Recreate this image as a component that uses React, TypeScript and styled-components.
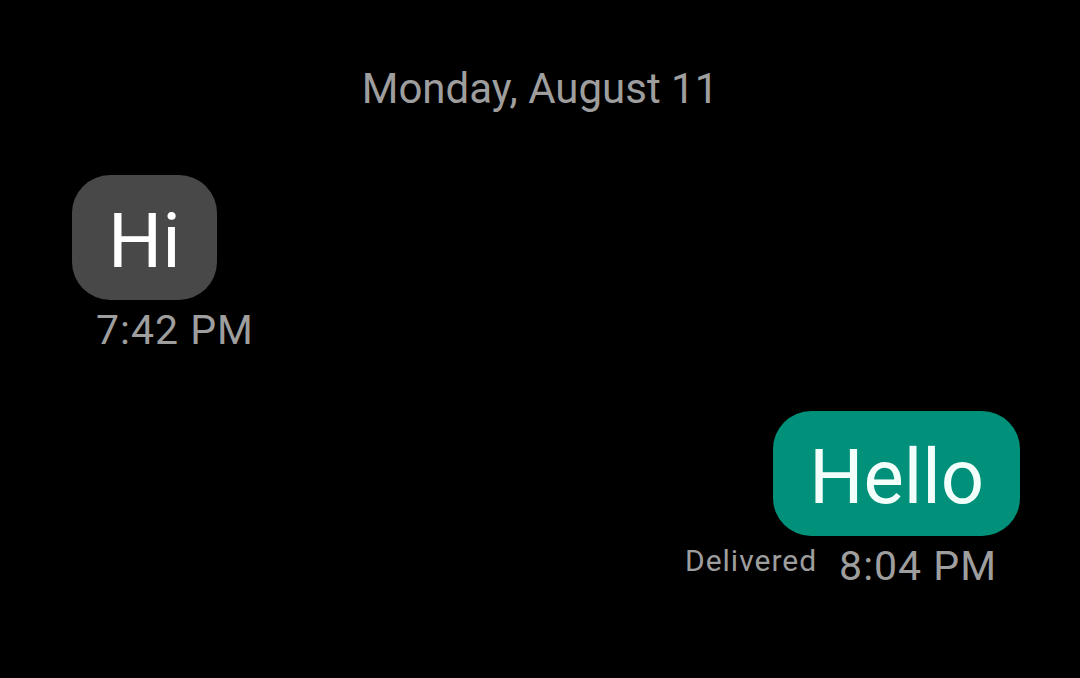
import React from 'react';
import styled, { createGlobalStyle } from 'styled-components';

const GlobalStyle = createGlobalStyle`
  html, body {
    margin: 0;
    padding: 0;
    background: #000;
  }
  body {
    font-family: Roboto, "Noto Sans", "Liberation Sans", sans-serif;
  }
`;

const Screen = styled.div`
  width: 1080px;
  height: 678px;
  background: #000;
  display: flex;
  flex-direction: column;
  padding-top: 64px;
  box-sizing: border-box;
  overflow: hidden;
`;

const DateHeader = styled.div`
  text-align: center;
  color: #9e9e9e;
  font-size: 42px;
  line-height: 49px;
  margin-bottom: 62px;
`;

const MessageGroup = styled.div<{ outgoing?: boolean }>`
  display: flex;
  flex-direction: column;
  align-items: ${(p) => (p.outgoing ? 'flex-end' : 'flex-start')};
  padding: ${(p) => (p.outgoing ? '0 60px 0 0' : '0 0 0 72px')};
  margin-bottom: 57px;
`;

const Bubble = styled.div<{ outgoing?: boolean }>`
  background: ${(p) => (p.outgoing ? '#01907a' : '#484848')};
  color: ${(p) => (p.outgoing ? '#f2fffb' : '#fff')};
  font-size: 76px;
  line-height: 89px;
  padding: 22px 36px 14px;
  border-radius: 38px;
`;

const MetaRow = styled.div`
  display: flex;
  align-items: flex-start;
  gap: 22px;
  margin-top: 6px;
  padding: 0 23px 0 24px;
`;

const Time = styled.span`
  color: #9e9e9e;
  font-size: 41px;
  line-height: 48px;
  letter-spacing: 1px;
`;

const Status = styled.span`
  color: #9e9e9e;
  font-size: 30px;
  line-height: 34px;
  letter-spacing: 1px;
  margin-top: 2px;
`;

export default function App() {
  return (
    <>
      <GlobalStyle />
      <Screen>
        <DateHeader>Monday, August 11</DateHeader>
        <MessageGroup>
          <Bubble>Hi</Bubble>
          <MetaRow>
            <Time>7:42 PM</Time>
          </MetaRow>
        </MessageGroup>
        <MessageGroup outgoing>
          <Bubble outgoing>Hello</Bubble>
          <MetaRow>
            <Status>Delivered</Status>
            <Time>8:04 PM</Time>
          </MetaRow>
        </MessageGroup>
      </Screen>
    </>
  );
}
